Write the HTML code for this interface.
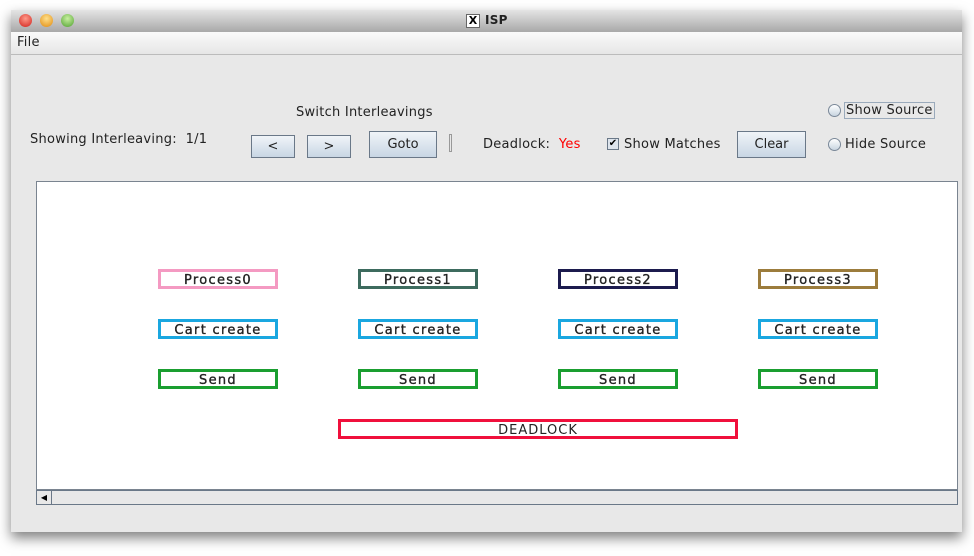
<!DOCTYPE html>
<html><head><style>
body{margin:0;width:974px;height:556px;background:#fff;position:relative;overflow:hidden;font-family:"DejaVu Sans","Liberation Sans",sans-serif;}
.win{position:absolute;left:11px;top:10px;width:951px;height:522px;background:#e8e8e8;box-shadow:0 6px 12px rgba(0,0,0,.5);}
.title{position:absolute;left:0;top:0;width:951px;height:22px;background:linear-gradient(#e4e4e4,#a8a8a8);border-bottom:1px solid #888;}
.tl{position:absolute;top:4px;width:13px;height:13px;border-radius:50%;}
.menu{position:absolute;left:0;top:22px;width:951px;height:22px;background:linear-gradient(#fafafa,#e6e6e6);border-bottom:1px solid #bbb;font-size:13px;}
.t{position:absolute;font-size:13px;color:#222;white-space:nowrap;letter-spacing:.25px;}
.btn{position:absolute;border:1px solid #6a7888;background:linear-gradient(#f0f4f8,#c8d6e4);font-size:13px;text-align:center;color:#222;box-sizing:border-box;}
.radio{position:absolute;width:11px;height:11px;border-radius:50%;border:1px solid #7a8898;background:linear-gradient(#fff,#c8d4e0);}
.canvas{position:absolute;left:36px;top:181px;width:922px;height:309px;background:#fff;border:1px solid #7a8490;box-sizing:border-box;}
.box{position:absolute;width:120px;height:20px;border:3px solid;box-sizing:border-box;font-size:13px;text-align:center;line-height:17px;color:#222;letter-spacing:1.3px;background:#fff;-webkit-text-stroke:0.35px #222;}
</style></head><body>
<div class="win">
<div class="title">
<div class="tl" style="left:8px;background:radial-gradient(circle at 50% 35%,#ff9a8a,#d0201a)"></div>
<div class="tl" style="left:29px;background:radial-gradient(circle at 50% 35%,#ffe08a,#e08a10)"></div>
<div class="tl" style="left:50px;background:radial-gradient(circle at 50% 35%,#c8f0a0,#50a030)"></div>
<div style="position:absolute;left:455px;top:4px;width:12px;height:12px;border:1px solid #666;background:#fff;font-size:11px;line-height:12px;text-align:center;font-weight:bold">X</div>
<div class="t" style="left:474px;top:3px;font-size:12px;font-weight:bold">ISP</div>
</div>
<div class="menu"><span class="t" style="left:6px;top:3px">File</span></div>
</div>
<div class="t" style="left:296px;top:105px">Switch Interleavings</div>
<div class="t" style="left:30px;top:132px">Showing Interleaving:&nbsp; 1/1</div>
<div class="btn" style="left:251px;top:135px;width:44px;height:23px;line-height:21px">&lt;</div>
<div class="btn" style="left:307px;top:135px;width:44px;height:23px;line-height:21px">&gt;</div>
<div class="btn" style="left:369px;top:131px;width:68px;height:27px;line-height:25px">Goto</div>
<div style="position:absolute;left:449px;top:134px;width:3px;height:18px;border:1px solid #999;box-sizing:border-box"></div>
<div class="t" style="left:483px;top:137px">Deadlock:&nbsp; <span style="color:#f00">Yes</span></div>
<div style="position:absolute;left:607px;top:138px;width:12px;height:12px;border:1px solid #6a7888;background:#dde4ec;box-sizing:border-box;font-size:10px;line-height:10px;text-align:center">✔</div>
<div class="t" style="left:624px;top:137px">Show Matches</div>
<div class="btn" style="left:737px;top:131px;width:69px;height:27px;line-height:25px">Clear</div>
<div class="radio" style="left:828px;top:104px"></div>
<div class="t" style="left:844px;top:102px;border:1px solid #9aaabb;padding:0 1px">Show Source</div>
<div class="radio" style="left:828px;top:138px"></div>
<div class="t" style="left:845px;top:137px">Hide Source</div>
<div class="canvas">
<div class="box" style="left:121px;top:87px;border-color:#f49ac2">Process0</div>
<div class="box" style="left:321px;top:87px;border-color:#3d6b5e">Process1</div>
<div class="box" style="left:521px;top:87px;border-color:#1c1b4e">Process2</div>
<div class="box" style="left:721px;top:87px;border-color:#9c7c3c">Process3</div>
<div class="box" style="left:121px;top:137px;border-color:#1aa7e0">Cart create</div>
<div class="box" style="left:321px;top:137px;border-color:#1aa7e0">Cart create</div>
<div class="box" style="left:521px;top:137px;border-color:#1aa7e0">Cart create</div>
<div class="box" style="left:721px;top:137px;border-color:#1aa7e0">Cart create</div>
<div class="box" style="left:121px;top:187px;border-color:#1a9e30">Send</div>
<div class="box" style="left:321px;top:187px;border-color:#1a9e30">Send</div>
<div class="box" style="left:521px;top:187px;border-color:#1a9e30">Send</div>
<div class="box" style="left:721px;top:187px;border-color:#1a9e30">Send</div>
<div class="box" style="left:301px;top:237px;width:400px;border-color:#f0103c;-webkit-text-stroke:0;letter-spacing:1px">DEADLOCK</div>
</div>
<div style="position:absolute;left:36px;top:490px;width:922px;height:15px;background:#e8e8e8;border:1px solid #6a7888;box-sizing:border-box"></div>
<div style="position:absolute;left:37px;top:491px;width:14px;height:13px;border-right:1px solid #6a7888;font-size:8px;line-height:13px;text-align:center">◀</div>
</body></html>
